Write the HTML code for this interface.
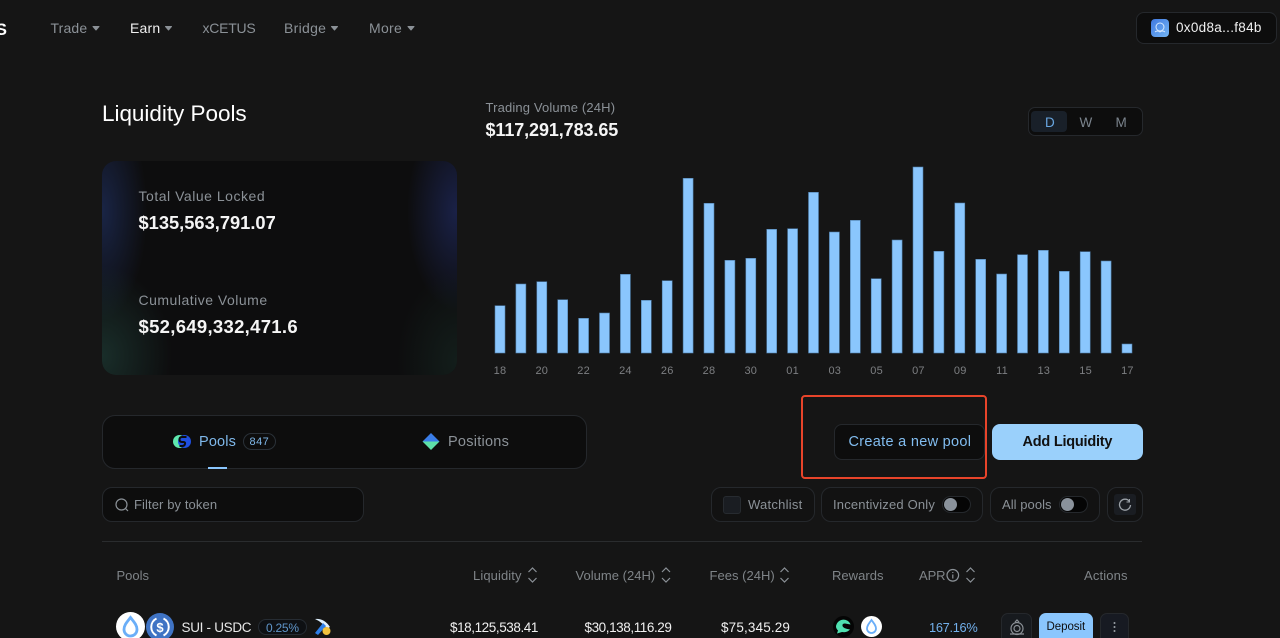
<!DOCTYPE html>
<html style="height:638px;overflow:hidden"><head><meta charset="utf-8"><style>
html,body{margin:0;padding:0;background:#151515}
body{width:1280px;height:638px;overflow:hidden;position:relative;font-family:"Liberation Sans",sans-serif}
#w{position:absolute;left:0;top:0;width:1280px;height:638px;overflow:hidden;background:#151515}
.t{position:absolute;white-space:nowrap;line-height:1}
.b{position:absolute;box-sizing:border-box;background:#0d0d0d;border:1px solid #25282c}
.g{color:#8b9197}
.h{position:absolute;white-space:nowrap;line-height:1;top:569px;font-size:13px;color:#7f8488}
svg{position:absolute;overflow:visible}
</style></head><body><div id="w">
<div class="t" style="left:-7px;top:21px;font-size:17px;font-weight:bold;color:#fff;width:14px;overflow:hidden;text-align:right">S</div>
<div class="t g" style="left:50.5px;top:21px;font-size:14px;letter-spacing:.15px">Trade</div>
<div class="t" style="left:130px;top:21px;font-size:14px;letter-spacing:.2px;color:#f0f0f0">Earn</div>
<div class="t g" style="left:202.5px;top:21px;font-size:14px;letter-spacing:-.25px">xCETUS</div>
<div class="t g" style="left:284px;top:21px;font-size:14px;letter-spacing:.3px">Bridge</div>
<div class="t g" style="left:369px;top:21px;font-size:14px;letter-spacing:.3px">More</div>
<svg style="left:0;top:0" width="1280" height="60"><path d="M93 26.500h6l-3 3.500zM165.500 26.500h6l-3 3.500zM331.500 26.500h6l-3 3.500zM408 26.500h6l-3 3.500z" fill="#8b9197" stroke="#8b9197" stroke-width="1" stroke-linejoin="round"/></svg>

<div class="b" style="left:1136px;top:12px;width:141px;height:32px;border-radius:8px"></div>
<div style="position:absolute;left:1151px;top:19px;width:18px;height:18px;border-radius:4px;background:linear-gradient(135deg,#3f78e0,#74b6f5)"></div>
<svg style="left:1151px;top:19px" width="18" height="18"><circle cx="9" cy="8" r="4" fill="none" stroke="#d5e8ff" stroke-width="1"/><path d="M4 13q2.500-2 5 0q2.500-2 5 0" fill="none" stroke="#d5e8ff" stroke-width="1"/></svg>
<div class="t" style="left:1176px;top:21px;font-size:13.500px;letter-spacing:.3px;color:#f0f0f0">0x0d8a...f84b</div>

<div class="t" style="left:102px;top:103px;font-size:22.500px;color:#fff;letter-spacing:-.03px">Liquidity Pools</div>
<div class="t g" style="left:485.500px;top:100.500px;font-size:13px;letter-spacing:.15px">Trading Volume (24H)</div>
<div class="t" style="left:485.500px;top:121px;font-size:18px;font-weight:bold;color:#f5f5f5;letter-spacing:-.1px">$117,291,783.65</div>

<div class="b" style="left:1028px;top:107px;width:115px;height:29px;border-radius:7px"></div>
<div style="position:absolute;left:1031px;top:111px;width:36px;height:21px;border-radius:4px;background:#192029"></div>
<div class="t" style="left:1045px;top:115.500px;font-size:13.500px;color:#68a6e0">D</div>
<div class="t g" style="left:1079.500px;top:115.500px;font-size:13.500px;color:#7b848d">W</div>
<div class="t g" style="left:1115.500px;top:115.500px;font-size:13.500px;color:#7b848d">M</div>

<div style="position:absolute;left:102px;top:161px;width:355px;height:214px;border-radius:14px;overflow:hidden;background:#0d0d0e">
<div style="position:absolute;left:-45px;top:-60px;width:90px;height:220px;background:radial-gradient(ellipse closest-side,rgba(38,60,125,.5),rgba(38,60,125,0))"></div>
<div style="position:absolute;right:-50px;top:-50px;width:100px;height:200px;background:radial-gradient(ellipse closest-side,rgba(38,52,125,.52),rgba(38,52,125,0))"></div>
<div style="position:absolute;left:-70px;top:105px;width:140px;height:180px;background:radial-gradient(ellipse closest-side,rgba(40,85,75,.45),rgba(40,85,75,0))"></div>
<div style="position:absolute;right:-60px;top:110px;width:120px;height:180px;background:radial-gradient(ellipse closest-side,rgba(30,60,50,.35),rgba(30,60,50,0))"></div>
</div>
<div class="t g" style="left:138.500px;top:188.500px;font-size:14px;letter-spacing:.52px">Total Value Locked</div>
<div class="t" style="left:138.500px;top:214px;font-size:18.300px;font-weight:bold;color:#f5f5f5">$135,563,791.07</div>
<div class="t g" style="left:138.500px;top:293px;font-size:14px;letter-spacing:.5px">Cumulative Volume</div>
<div class="t" style="left:138.500px;top:318px;font-size:18.500px;font-weight:bold;color:#f5f5f5;letter-spacing:.3px">$52,649,332,471.6</div>

<svg style="left:0;top:0" width="1280" height="380"><g fill="#8ac6fd" stroke="#4f7da8" stroke-width=".6">
<rect x="495" y="305.700" width="10" height="47.300"/><rect x="515.900" y="284" width="10" height="69"/><rect x="536.800" y="281.700" width="10" height="71.300"/><rect x="557.700" y="299.700" width="10" height="53.300"/><rect x="578.600" y="318.300" width="10" height="34.700"/><rect x="599.500" y="313" width="10" height="40"/><rect x="620.400" y="274.300" width="10" height="78.700"/><rect x="641.300" y="300.300" width="10" height="52.700"/><rect x="662.200" y="280.700" width="10" height="72.300"/><rect x="683.100" y="178.300" width="10" height="174.700"/><rect x="704" y="203.300" width="10" height="149.700"/><rect x="724.900" y="260.300" width="10" height="92.700"/><rect x="745.800" y="258.300" width="10" height="94.700"/><rect x="766.700" y="229.300" width="10" height="123.700"/><rect x="787.600" y="228.700" width="10" height="124.300"/><rect x="808.500" y="192.300" width="10" height="160.700"/><rect x="829.400" y="232" width="10" height="121"/><rect x="850.300" y="220.300" width="10" height="132.700"/><rect x="871.200" y="278.700" width="10" height="74.300"/><rect x="892.100" y="240" width="10" height="113"/><rect x="913" y="167" width="10" height="186"/><rect x="933.900" y="251.300" width="10" height="101.700"/><rect x="954.800" y="203" width="10" height="150"/><rect x="975.700" y="259.300" width="10" height="93.700"/><rect x="996.600" y="274" width="10" height="79"/><rect x="1017.500" y="254.700" width="10" height="98.300"/><rect x="1038.400" y="250.300" width="10" height="102.700"/><rect x="1059.300" y="271.300" width="10" height="81.700"/><rect x="1080.200" y="251.700" width="10" height="101.300"/><rect x="1101.100" y="261" width="10" height="92"/><rect x="1122" y="344" width="10" height="9"/>
</g>
<g fill="#7d7f82" font-family="Liberation Sans" font-size="11" text-anchor="middle" letter-spacing=".2">
<text x="500" y="374">18</text><text x="541.800" y="374">20</text><text x="583.600" y="374">22</text><text x="625.400" y="374">24</text><text x="667.200" y="374">26</text><text x="709" y="374">28</text><text x="750.800" y="374">30</text><text x="792.600" y="374">01</text><text x="834.800" y="374">03</text><text x="876.600" y="374">05</text><text x="918.400" y="374">07</text><text x="960.200" y="374">09</text><text x="1002" y="374">11</text><text x="1043.800" y="374">13</text><text x="1085.600" y="374">15</text><text x="1127.400" y="374">17</text>
</g></svg>

<div class="b" style="left:102px;top:415px;width:485px;height:54px;border-radius:13px"></div>
<svg style="left:172px;top:433px" width="20" height="18"><circle cx="7.500" cy="8.500" r="6.500" fill="#5fe8ae"/><circle cx="12.500" cy="8.500" r="6.500" fill="#1f4fe0"/><path d="M14.500 4H10Q7.500 4 7.500 6.500T10 9H11.500Q13.500 9 13 11T10 13H7.500" fill="none" stroke="#0d0d0d" stroke-width="2"/></svg>
<div class="t" style="left:199px;top:434.500px;font-size:14.500px;color:#7fb8ea;letter-spacing:.15px">Pools</div>
<div style="position:absolute;box-sizing:border-box;left:243px;top:433px;width:33px;height:17px;border-radius:9px;border:1px solid #2a3138"></div>
<div class="t" style="left:249.500px;top:436.500px;font-size:11px;color:#7fb8ea;letter-spacing:.45px">847</div>
<div style="position:absolute;left:208px;top:466.500px;width:19px;height:2px;background:#8ac6fd"></div>
<svg style="left:422px;top:433px" width="18" height="18"><path d="M9 0L17.500 8.500H.5z" fill="#3a7de8"/><path d="M.5 8.500H17.500L9 17z" fill="#5ee0a8"/></svg>
<div class="t g" style="left:448px;top:434.500px;font-size:14.500px;letter-spacing:.25px">Positions</div>

<div class="b" style="left:834px;top:424px;width:151px;height:36px;border-radius:8px"></div>
<div class="t" style="left:848.500px;top:434.500px;font-size:14.500px;color:#82bdf0;letter-spacing:.3px">Create a new pool</div>
<div style="position:absolute;left:992px;top:424px;width:151px;height:36px;border-radius:8px;background:#9ad0fb"></div>
<div class="t" style="left:1022.500px;top:434.500px;font-size:14.500px;font-weight:bold;color:#111;letter-spacing:-.22px">Add Liquidity</div>
<div style="position:absolute;box-sizing:border-box;left:801px;top:394.500px;width:186px;height:84.500px;border:2.500px solid #e8442a;border-radius:4px"></div>

<div class="b" style="left:102px;top:487px;width:262px;height:35px;border-radius:10px"></div>
<svg style="left:114px;top:497px" width="16" height="16"><circle cx="7.500" cy="7.500" r="5.500" fill="none" stroke="#8b9197" stroke-width="1.200"/><path d="M11.500 11.500L14 14" stroke="#8b9197" stroke-width="1.200"/></svg>
<div class="t g" style="left:134px;top:497.500px;font-size:13px;letter-spacing:.1px">Filter by token</div>

<div class="b" style="left:711px;top:487px;width:104px;height:35px;border-radius:10px;background:#121212"></div>
<div style="position:absolute;box-sizing:border-box;left:723px;top:496px;width:18px;height:18px;border-radius:3px;background:#1a1d22;border:1px solid #272b30"></div>
<div class="t g" style="left:748px;top:497.500px;font-size:13px;letter-spacing:.25px">Watchlist</div>
<div class="b" style="left:821px;top:487px;width:162px;height:35px;border-radius:10px;background:#121212"></div>
<div class="t g" style="left:833px;top:497.500px;font-size:13px;letter-spacing:.18px">Incentivized Only</div>
<div style="position:absolute;box-sizing:border-box;left:942px;top:496px;width:29px;height:17px;border-radius:9px;background:#050505;border:1px solid #25282c"></div>
<div style="position:absolute;left:944px;top:498px;width:13px;height:13px;border-radius:50%;background:#8a929b"></div>
<div class="b" style="left:990px;top:487px;width:110px;height:35px;border-radius:10px;background:#121212"></div>
<div class="t g" style="left:1002px;top:497.500px;font-size:13px;letter-spacing:.05px">All pools</div>
<div style="position:absolute;box-sizing:border-box;left:1059px;top:496px;width:29px;height:17px;border-radius:9px;background:#050505;border:1px solid #25282c"></div>
<div style="position:absolute;left:1061px;top:498px;width:13px;height:13px;border-radius:50%;background:#8a929b"></div>
<div class="b" style="left:1107px;top:487px;width:36px;height:35px;border-radius:10px;background:#121212"></div>
<div style="position:absolute;left:1114px;top:494px;width:22px;height:21px;border-radius:3px;background:#1a1d22"></div>
<svg style="left:1117px;top:497px" width="16" height="16"><path d="M12.500 4.500A5.500 5.500 0 1 0 13.500 8" fill="none" stroke="#9aa0a6" stroke-width="1.300"/><path d="M12.500 2V5H9.500" fill="none" stroke="#9aa0a6" stroke-width="1"/></svg>

<div style="position:absolute;left:102px;top:541px;width:1040px;height:1px;background:#2a2c2e"></div>

<div class="h" style="left:116.500px">Pools</div>
<div class="h" style="left:473px;letter-spacing:.1px">Liquidity</div>
<div class="h" style="left:575.500px;letter-spacing:.02px">Volume (24H)</div>
<div class="h" style="left:709.500px;letter-spacing:.02px">Fees (24H)</div>
<div class="h" style="left:832px;letter-spacing:.03px">Rewards</div>
<div class="h" style="left:919px;letter-spacing:-.1px">APR</div>
<div class="h" style="left:1084px;letter-spacing:.15px">Actions</div>
<svg style="left:0;top:560px" width="1280" height="30"><g fill="none" stroke="#8b9197" stroke-width="1.200"><path d="M528.500 12L532.500 8L536.500 12M528.500 18L532.500 22L536.500 18"/><path d="M662 12L666 8L670 12M662 18L666 22L670 18"/><path d="M780.500 12L784.500 8L788.500 12M780.500 18L784.500 22L788.500 18"/><path d="M966.500 12L970.500 8L974.500 12M966.500 18L970.500 22L974.500 18"/><circle cx="952.800" cy="15.300" r="5.800"/><path d="M952.800 14.500V18.500M952.800 12V13"/></g></svg>

<div style="position:absolute;left:116px;top:612px;width:29px;height:29px;border-radius:50%;background:#fff"></div>
<svg style="left:116px;top:612px" width="29" height="29"><path d="M14.500 5.500C11 10 8 13 8 17.500A6.500 6.500 0 0 0 21 17.500C21 13 18 10 14.500 5.500Z" fill="none" stroke="#6aaef8" stroke-width="2.800"/></svg>
<div style="position:absolute;left:146px;top:613px;width:28px;height:28px;border-radius:50%;background:#3f73c4"></div>
<svg style="left:146px;top:613px" width="28" height="28"><path d="M10.500 5.500A9.500 9.500 0 0 0 10.500 22.500M17.500 5.500A9.500 9.500 0 0 1 17.500 22.500" fill="none" stroke="#fff" stroke-width="2"/><text x="14" y="19" text-anchor="middle" font-size="13" font-weight="bold" fill="#fff" font-family="Liberation Sans">$</text></svg>
<div class="t" style="left:181.500px;top:621px;font-size:13.500px;color:#e8e8e8;letter-spacing:-.3px">SUI - USDC</div>
<div style="position:absolute;box-sizing:border-box;left:258px;top:619px;width:49px;height:16px;border-radius:8px;border:1px solid #262c33;background:#0e1013"></div>
<div class="t" style="left:266px;top:621.500px;font-size:12px;color:#5f95c9;letter-spacing:-.25px">0.25%</div>
<svg style="left:314px;top:618px" width="18" height="18"><path d="M1 1Q10 0 16 9L13 11Q8 4 1 1Z" fill="#dff0ff"/><path d="M9 5L1 15L4 17L12 8Z" fill="#2f7fe8"/><circle cx="12.500" cy="13" r="4" fill="#f2c23e"/></svg>
<div class="t" style="left:450px;top:621px;font-size:13.500px;color:#f0f0f0;letter-spacing:-.42px">$18,125,538.41</div>
<div class="t" style="left:584.500px;top:621px;font-size:13.500px;color:#f0f0f0;letter-spacing:-.42px">$30,138,116.29</div>
<div class="t" style="left:721px;top:621px;font-size:13.500px;color:#f0f0f0;letter-spacing:.15px">$75,345.29</div>
<div style="position:absolute;left:833px;top:616px;width:21px;height:21px;border-radius:50%;background:#050505"></div>
<svg style="left:833px;top:616px" width="21" height="21"><path d="M3 10.500A7.500 7.500 0 0 1 17.500 8.500L12 7.500Q9 7.500 9.500 10T17 13.500Q14 17 9 16L4 17.500L5 14.500Q3 12.500 3 10.500Z" fill="#4fe0b0"/></svg>
<div style="position:absolute;left:861px;top:616px;width:21px;height:21px;border-radius:50%;background:#fff"></div>
<svg style="left:861px;top:616px" width="21" height="21"><path d="M10.500 4C8 7.500 6 9.500 6 12.500A4.500 4.500 0 0 0 15 12.500C15 9.500 13 7.500 10.500 4Z" fill="none" stroke="#6aaef8" stroke-width="1.800"/></svg>
<div class="t" style="left:929px;top:621.500px;font-size:12.800px;color:#72b0ec;letter-spacing:-.3px">167.16%</div>
<div style="position:absolute;box-sizing:border-box;left:1001px;top:613px;width:31px;height:34px;border-radius:7px;background:#171a1e;border:1px solid #25282c"></div>
<svg style="left:1008px;top:619px" width="18" height="18"><circle cx="9" cy="9.500" r="6" fill="none" stroke="#8b9197" stroke-width="1.200"/><circle cx="9" cy="9.500" r="3" fill="none" stroke="#8b9197" stroke-width="1.200"/><path d="M7 3L9 1L11 3M2 15H16" fill="none" stroke="#8b9197" stroke-width="1.200"/></svg>
<div style="position:absolute;left:1039px;top:613px;width:54px;height:34px;border-radius:7px;background:#8ac6fd"></div>
<div class="t" style="left:1046.500px;top:622px;font-size:11.500px;color:#0e0e0e;letter-spacing:-.05px">Deposit</div>
<div style="position:absolute;box-sizing:border-box;left:1100px;top:613px;width:29px;height:34px;border-radius:7px;background:#171a22;border:1px solid #25282c"></div>
<svg style="left:1100px;top:613px" width="29" height="25"><g fill="#9aa0a6"><circle cx="14.500" cy="10" r="1"/><circle cx="14.500" cy="14" r="1"/><circle cx="14.500" cy="18" r="1"/></g></svg>
</div></body></html>
